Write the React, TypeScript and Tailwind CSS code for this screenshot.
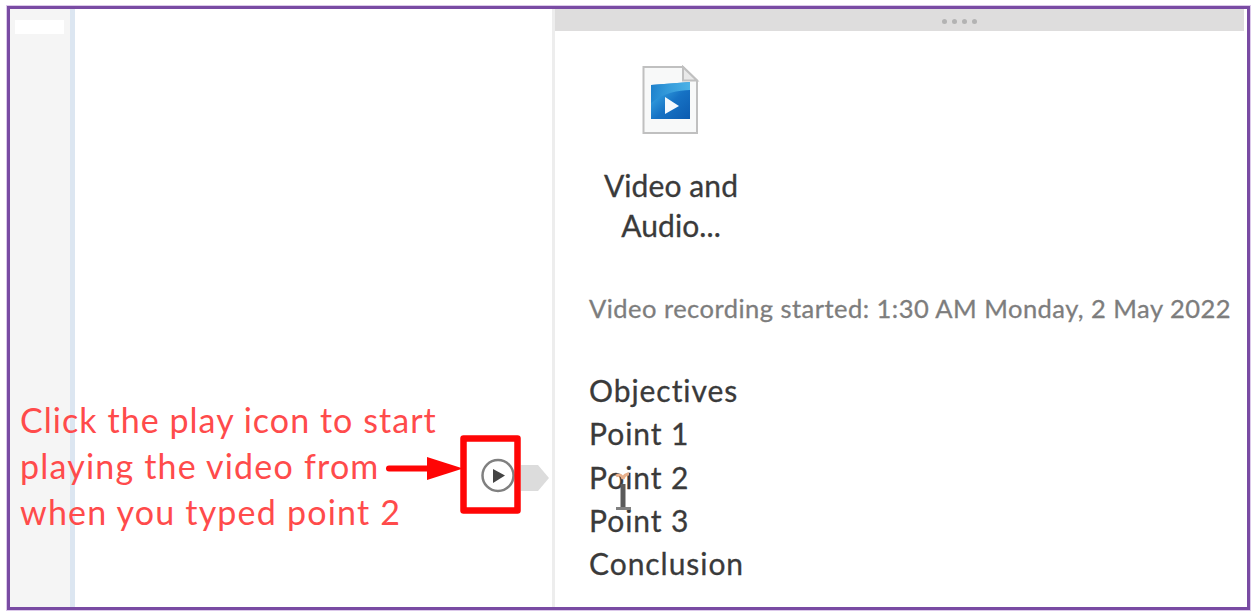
import React from "react";

const notes = ["Objectives", "Point 1", "Point 2", "Point 3", "Conclusion"];

function VideoFileIcon() {
  return (
    <svg width="60" height="70" viewBox="0 0 60 70" className="block">
      <defs>
        <linearGradient id="screen" x1="0" y1="0" x2="1" y2="1">
          <stop offset="0" stopColor="#1267b4" />
          <stop offset="0.3" stopColor="#2b93d8" />
          <stop offset="0.55" stopColor="#1672c4" />
          <stop offset="1" stopColor="#0c5bb0" />
        </linearGradient>
        <linearGradient id="shine" x1="0" y1="0" x2="1" y2="0">
          <stop offset="0" stopColor="#1f84cf" />
          <stop offset="1" stopColor="#55bdec" />
        </linearGradient>
      </defs>
      <path d="M2.500 2H42L56 15.500V68H2.500Z" fill="#f8f9f9" stroke="#c0c0c0" strokeWidth="2" />
      <path d="M42 2V15.500H56Z" fill="#e9e9e9" stroke="#c0c0c0" strokeWidth="2" />
      <path d="M10 20L49 17V54H10Z" fill="url(#screen)" />
      <path d="M10 20L49 17V25C38 25 22 28 10 38Z" fill="url(#shine)" opacity="0.85" />
      <path d="M24 32V49L38 41Z" fill="#f4f9fd" />
    </svg>
  );
}

export default function App() {
  return (
    <div className="h-[613px] w-[1257px] overflow-hidden bg-white pl-[7px] pt-[6px] font-['Lato','Liberation_Sans',sans-serif]">
      <div className="relative flex h-[604px] w-[1243px] border-[3px] border-[#794ba3] bg-white ring-1 ring-[#dcc9ea]">
        <aside className="w-[60px] shrink-0 bg-[#f5f5f5] pl-[5px] pt-[11px]">
          <div className="h-[14px] w-[49px] bg-white" />
        </aside>
        <div className="w-[5px] shrink-0 bg-[#dce6f1]" />
        <div className="w-[477px] shrink-0" />
        <main className="flex-1 border-l-[3px] border-[#ededed]">
          <div className="flex h-[22px] w-[689px] items-center justify-center gap-[5px] bg-[#dedddd] pl-[119px] pt-[2px]">
            <i className="size-[5px] rounded-full bg-[#b3b3b3]" />
            <i className="size-[5px] rounded-full bg-[#b3b3b3]" />
            <i className="size-[5px] rounded-full bg-[#b3b3b3]" />
            <i className="size-[5px] rounded-full bg-[#b3b3b3]" />
          </div>
          <div className="ml-[34px] mt-[34px] flex w-[164px] flex-col items-center">
            <VideoFileIcon />
            <div className="mt-[30px] whitespace-nowrap text-center text-[30px] leading-[40px] tracking-[0.1px] text-[#3a3a3a] [-webkit-text-stroke:0.3px_#3a3a3a]">
              <div>Video and</div>
              <div>Audio...</div>
            </div>
          </div>
          <p className="ml-[34px] mt-[43px] whitespace-nowrap text-[25.5px] leading-[40px] tracking-[0.47px] text-[#7d7d7d] [-webkit-text-stroke:0.3px_#7d7d7d]">
            Video recording started: 1:30 AM Monday, 2 May 2022
          </p>
          <div className="ml-[34px] mt-[41px] whitespace-nowrap text-[30px] leading-[43.250px] tracking-[0.95px] text-[#3a3a3a] [-webkit-text-stroke:0.3px_#3a3a3a]">
            {notes.map((n) => (
              <div key={n}>{n}</div>
            ))}
          </div>
        </main>

        <div className="absolute left-[10px] top-[388px] whitespace-nowrap text-[34px] leading-[46px] text-[#ff4b4b]">
          <div className="tracking-[1.05px]">Click the play icon to start</div>
          <div className="tracking-[1.2px]">playing the video from</div>
          <div className="tracking-[1.2px]">when you typed point 2</div>
        </div>
        <svg className="absolute left-[370px] top-[421px]" width="180" height="100" viewBox="380 430 180 100">
          <path d="M521 465H538L549 478L538 491H521Z" fill="#dcdcdc" />
          <circle cx="498" cy="475.500" r="15.500" fill="#fff" stroke="#808080" strokeWidth="2.500" />
          <path d="M493 469V483L505 475.500Z" fill="#444" />
          <rect x="463.500" y="438.500" width="54" height="72" fill="none" stroke="#ff0505" strokeWidth="6.500" strokeLinejoin="round" />
          <path d="M389 468.500H430" stroke="#ff0505" strokeWidth="6" strokeLinecap="round" />
          <path d="M427 457L463 468.500L427 480Z" fill="#ff0505" />
        </svg>
        <svg className="absolute left-[603px] top-[461px]" width="24" height="54" viewBox="613 470 24 54">
          <path d="M616 476C620 474 622 475 623 479C624 475 626 474 629 474" fill="none" stroke="#e8b08c" strokeWidth="3" />
          <path d="M623 484V507" stroke="#5a5a5a" strokeWidth="5" />
          <path d="M616 508.500H631" stroke="#808080" strokeWidth="3" />
        </svg>
      </div>
    </div>
  );
}
